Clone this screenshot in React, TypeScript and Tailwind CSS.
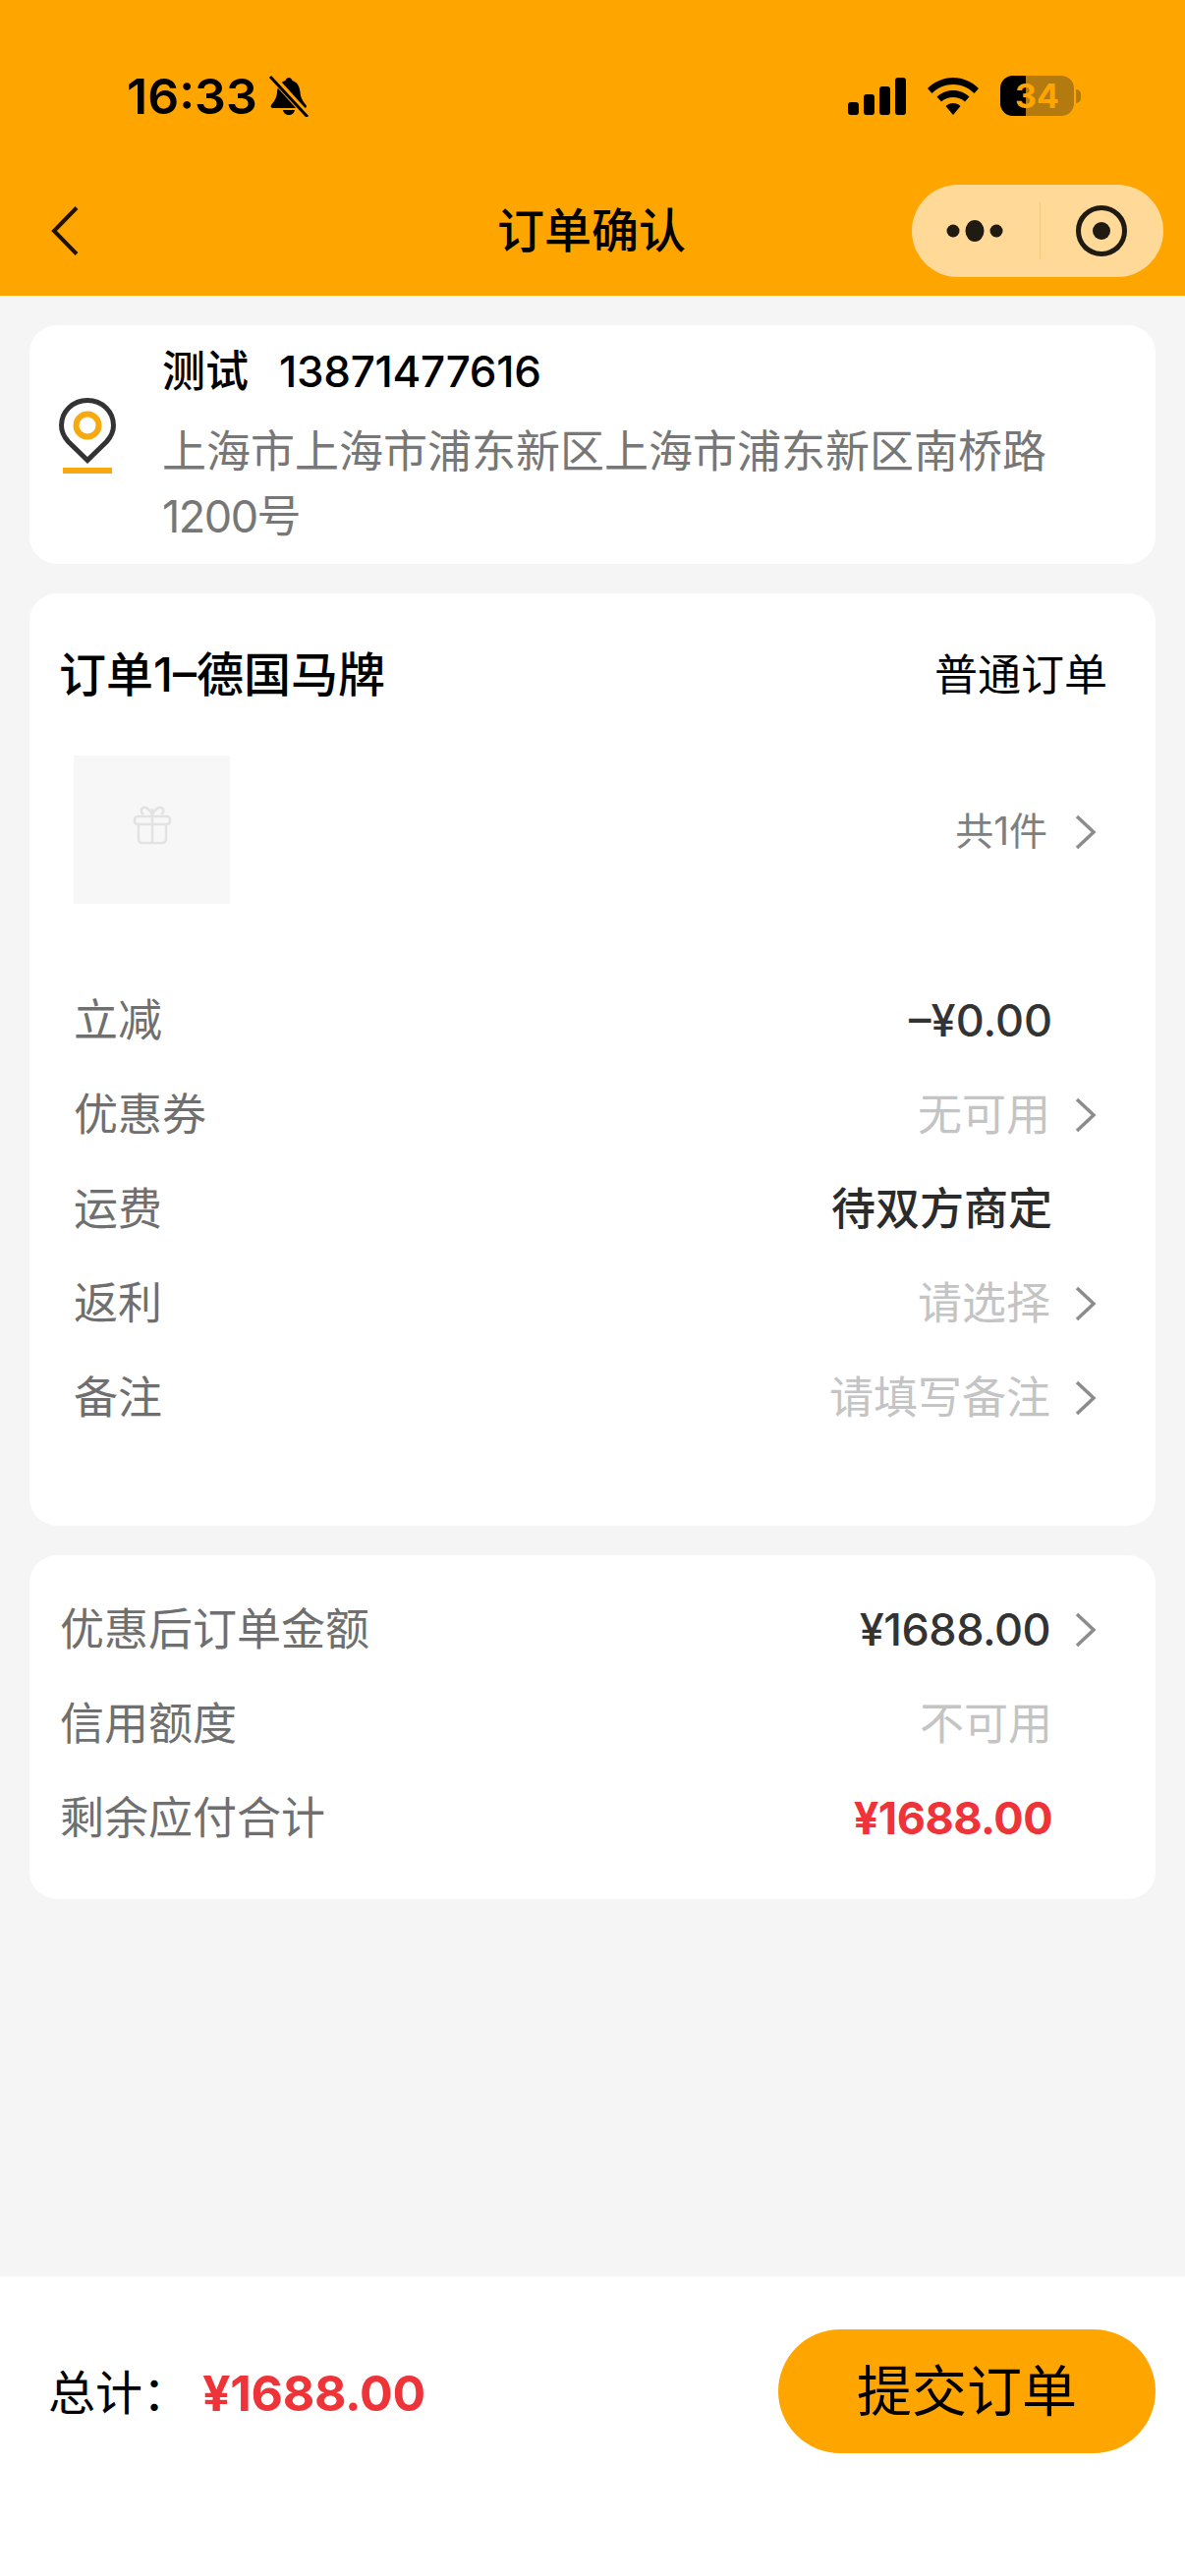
const rows = [
  { label: '立减', value: '–¥0.00', tone: 'text-[#333333] font-medium', arrow: false },
  { label: '优惠券', value: '无可用', tone: 'text-[#c4c4c4]', arrow: true },
  { label: '运费', value: '待双方商定', tone: 'text-[#2b2b2b] font-medium', arrow: false },
  { label: '返利', value: '请选择', tone: 'text-[#c4c4c4]', arrow: true },
  { label: '备注', value: '请填写备注', tone: 'text-[#c4c4c4]', arrow: true },
];

const summary = [
  { label: '优惠后订单金额', value: '¥1688.00', tone: 'text-[#333333] font-medium tracking-[-0.5px]', arrow: true },
  { label: '信用额度', value: '不可用', tone: 'text-[#c4c4c4]', arrow: false },
  { label: '剩余应付合计', value: '¥1688.00', tone: 'text-[#ee3339] font-bold tracking-[-0.5px]', arrow: false },
];

const Chevron = () => (
  <svg viewBox="0 0 22 36" className="h-[36px] w-[22px]" fill="none" stroke="#8c8c8c" strokeWidth="3.500">
    <path d="M2 2l17 16L2 34" />
  </svg>
);

const Row = ({ label, value, tone, arrow }: { label: string; value: string; tone: string; arrow: boolean }) => (
  <div className="flex h-[96px] items-center justify-between">
    <span className="text-[45px] text-[#6f6f6f]">{label}</span>
    <div className="flex items-center">
      <span className={`text-[45px] ${tone}`}>{value}</span>
      <div className={arrow ? 'flex w-[47px] justify-end' : 'flex w-[45px] justify-end'}>{arrow && <Chevron />}</div>
    </div>
  </div>
);

const BellOff = () => (
  <svg viewBox="0 0 44 42" className="h-[42px] w-[44px]">
    <path d="M22 2c2 0 3 1.500 3.500 3 5 1.500 7.500 6 8 12 .5 6 3 9 6 13 1 2 0 3-2 3H6c-2 0-3-1-2-3 3-4 5.500-7 6-13 .5-6 3-10.500 8.500-12C19 3.500 20 2 22 2z" fill="#000" />
    <path d="M16 35h12c-.5 3-3 5-6 5s-5.500-2-6-5z" fill="#000" />
    <path d="M3 -1l39 43" stroke="#FFA500" strokeWidth="7" />
    <path d="M3 1l38 41" stroke="#000" strokeWidth="3" />
  </svg>
);

const StatusBar = () => (
  <div className="flex h-[182px] items-center justify-between pl-[129px] pr-[106px] pt-[13px]">
    <div className="flex items-center gap-[10px]">
      <span className="text-[50px] leading-none font-semibold text-black">16:33</span>
      <BellOff />
    </div>
    <div className="flex items-center gap-[22px]">
      <svg viewBox="0 0 59 38" className="h-[38px] w-[59px]">
        <rect x="0" y="25" width="11" height="13" rx="3" />
        <rect x="16" y="17" width="11" height="21" rx="3" />
        <rect x="32" y="9" width="11" height="29" rx="3" />
        <rect x="48" y="0" width="11" height="38" rx="3" />
      </svg>
      <svg viewBox="0 0 52 38" className="h-[38px] w-[52px]">
        <path d="M26 0c10 0 19 4 26 11l-4.500 5C41.500 10 34 7 26 7S10.500 10 4.500 16L0 11C7 4 16 0 26 0z" />
        <path d="M26 13c6.500 0 12 2.500 16.500 6.500l-4.500 5C35 21.500 30.500 20 26 20s-9 1.500-12 4.500l-4.500-5C14 15.500 19.500 13 26 13z" />
        <path d="M26 26c3 0 5.500 1 7.500 3L26 38l-7.500-9c2-2 4.500-3 7.500-3z" />
      </svg>
      <div className="flex items-center gap-[2px]">
        <div className="relative flex h-[41px] w-[75px] items-center justify-center overflow-hidden rounded-[13px] bg-[#b37a10]">
          <div className="absolute inset-y-0 left-0 w-[26px] bg-black" />
          <span className="relative text-[34px] leading-none font-bold text-[#FFA500]">34</span>
        </div>
        <div className="h-[14px] w-[5px] rounded-r-full bg-[#b37a10]" />
      </div>
    </div>
  </div>
);

const NavBar = () => (
  <div className="relative flex h-[106px] items-center justify-between pl-[52px] pr-[22px]">
    <svg viewBox="0 0 28 50" className="h-[50px] w-[28px]" fill="none" stroke="#1f1300" strokeWidth="4">
      <path d="M26 1.500 3 25l23 23.500" />
    </svg>
    <h1 className="absolute inset-x-0 pr-[2px] text-center text-[48px] font-medium text-black">订单确认</h1>
    <div className="relative flex h-[94px] w-[256px] items-center rounded-full bg-[#ffd998]">
      <svg viewBox="0 0 130 94" className="h-[94px] w-[130px]">
        <circle cx="42" cy="47" r="6.500" fill="#1f1a12" />
        <ellipse cx="64" cy="47" rx="9.500" ry="11" fill="#1f1a12" />
        <circle cx="86" cy="47" r="6.500" fill="#1f1a12" />
      </svg>
      <div className="h-[58px] w-px bg-[#f5c77c]" />
      <svg viewBox="0 0 125 94" className="h-[94px] w-[125px]">
        <circle cx="62" cy="47" r="23.500" fill="none" stroke="#1f1a12" strokeWidth="5" />
        <circle cx="62" cy="47" r="9" fill="#1f1a12" />
      </svg>
    </div>
  </div>
);

const PinIcon = () => (
  <svg viewBox="0 0 58 78" className="h-[78px] w-[58px] shrink-0">
    <path d="M29 2.500C14 2.500 2.500 14 2.500 28c0 7 3 12 7 16.500L29 63.500l19.500-19C52.500 40 55.500 35 55.500 28 55.500 14 44 2.500 29 2.500z" fill="none" stroke="#333333" strokeWidth="5" />
    <circle cx="29" cy="28" r="11.500" fill="none" stroke="#f7a90f" strokeWidth="6" />
    <rect x="4" y="71" width="50" height="6" fill="#f7a90f" />
  </svg>
);

const GiftIcon = () => (
  <svg viewBox="0 0 40 40" className="size-[40px]" fill="none" stroke="#e2e2e2" strokeWidth="2.500">
    <rect x="2" y="11" width="36" height="8" rx="3" />
    <path d="M6 19v15a4 4 0 0 0 4 4h20a4 4 0 0 0 4-4V19M20 3v35" />
    <path d="M20 9c-3-5-6-8-9-7-3 1-3 5 0 7M20 9c3-5 6-8 9-7 3 1 3 5 0 7" />
  </svg>
);

export default function App() {
  return (
    <div className="flex h-[2622px] flex-col bg-[#f5f5f5] font-['Inter','Noto_Sans_CJK_SC',sans-serif]">
      <header className="h-[301px] bg-[#FFA500]">
        <StatusBar />
        <NavBar />
      </header>

      <main className="flex flex-1 flex-col gap-[30px] px-[30px] pt-[30px]">
        <section className="flex h-[243px] gap-[47px] rounded-[28px] bg-white pl-[30px] pr-[90px] pt-[17px]">
          <div className="flex h-[188px] items-center pt-[4px]">
            <PinIcon />
          </div>
          <div>
            <div className="flex h-[60px] items-center gap-[31px] text-[44px] font-medium text-black">
              <span>测试</span>
              <span className="tracking-[-0.3px]">13871477616</span>
            </div>
            <p className="mt-[19px] text-[45px] leading-[66px] text-[#777777]">
              上海市上海市浦东新区上海市浦东新区南桥路 <span className="tracking-[-1.500px]">1200</span>号
            </p>
          </div>
        </section>

        <section className="h-[949px] rounded-[28px] bg-white pt-[53px]">
          <div className="flex h-[60px] items-center justify-between pl-[30px] pr-[49px]">
            <span className="text-[48px] font-medium text-black">订单1–德国马牌</span>
            <span className="text-[44px] text-black">普通订单</span>
          </div>
          <div className="mt-[52px] flex items-center justify-between pl-[45px] pr-[60px]">
            <div className="flex h-[151px] w-[159px] items-center justify-center bg-[#f7f7f7] pb-[10px]">
              <GiftIcon />
            </div>
            <div className="flex items-center pt-[4px]">
              <span className="text-[39px] text-[#7f7f7f]">共1件</span>
              <div className="flex w-[50px] justify-end">
                <Chevron />
              </div>
            </div>
          </div>
          <div className="mt-[71px] pl-[45px] pr-[60px]">
            {rows.map((row) => (
              <Row key={row.label} {...row} />
            ))}
          </div>
        </section>

        <section className="h-[350px] rounded-[28px] bg-white pl-[31px] pr-[60px] pt-[28px]">
          {summary.map((row) => (
            <Row key={row.label} {...row} />
          ))}
        </section>
      </main>

      <footer className="h-[305px] bg-white pl-[49px] pr-[30px] pt-[54px]">
        <div className="flex items-center justify-between">
          <div className="flex items-center pt-[4px]">
            <span className="w-[157px] text-[48px] text-black">总计：</span>
            <span className="text-[50px] font-bold tracking-[-0.3px] text-[#ee3339]">¥1688.00</span>
          </div>
          <button className="h-[126px] w-[384px] rounded-full bg-[#FFA500] text-[56px] text-black">提交订单</button>
        </div>
      </footer>
    </div>
  );
}
